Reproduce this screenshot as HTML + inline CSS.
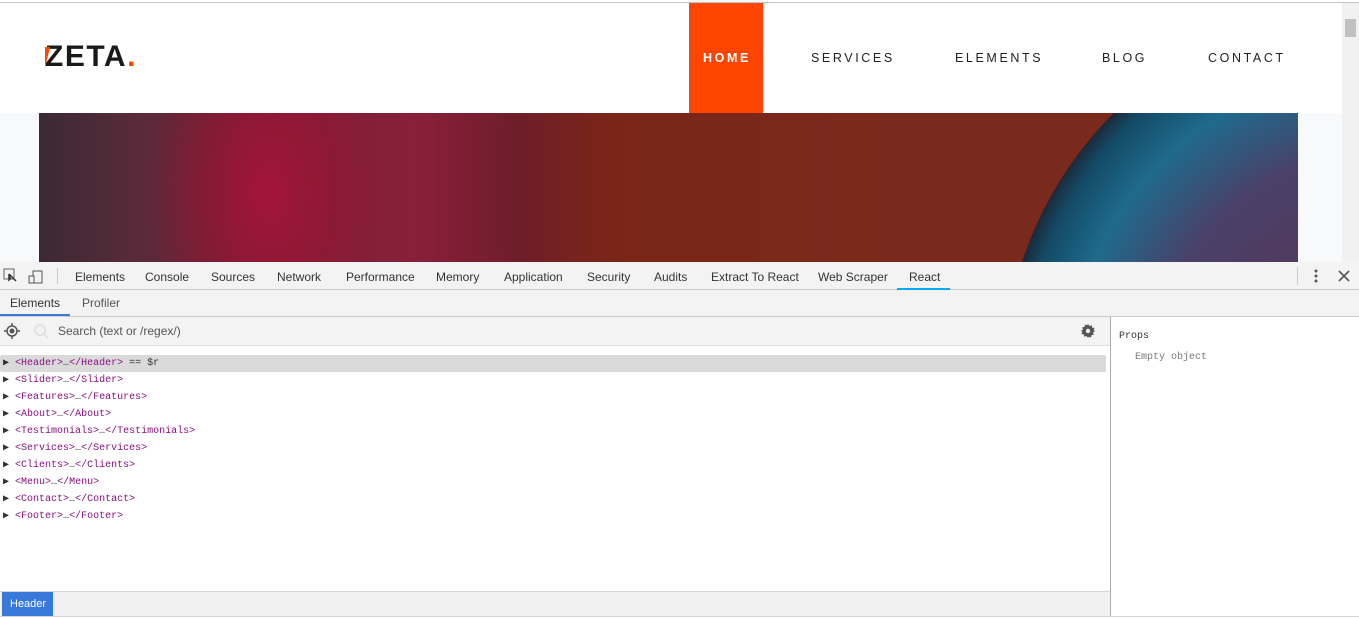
<!DOCTYPE html>
<html><head><style>
*{margin:0;padding:0;box-sizing:border-box}
body{width:1359px;height:619px;overflow:hidden;background:#fff;font-family:"Liberation Sans",sans-serif;position:relative}
.abs{position:absolute}
.nav{font-size:12.5px;letter-spacing:2.6px;color:#222;top:51px}
.tab{position:absolute;top:270px;font-size:12px;color:#333}
.tree{position:absolute;left:3px;font-family:"Liberation Mono",monospace;font-size:10px;color:#881280;line-height:17px}
.tree span{color:#333}
</style></head><body>
<div class="abs" style="left:0;top:2px;width:1359px;height:1px;background:#c4c4c4"></div>
<div class="abs" style="left:0;top:113px;width:1342px;height:149px;background:#f8f9fb"></div>
<div class="abs" style="left:39px;top:113px;width:1259px;height:149px;overflow:hidden;background:
radial-gradient(ellipse 120px 200px at 230px 80px,#a3143a 0%,rgba(150,20,50,.6) 55%,rgba(0,0,0,0) 100%),
linear-gradient(90deg,#3a2a33 0%,#5a2a3a 8%,#6b2436 15%,#8a1f3a 30%,#6e1d2a 38%,#7a2518 45%,#7a2a1c 70%,#7a2a1c 100%)">
<svg width="1259" height="149" style="position:absolute;left:0;top:0"><defs><radialGradient id="g" cx="1341" cy="267" r="377" gradientUnits="userSpaceOnUse"><stop offset="0" stop-color="#5a3050"/><stop offset="0.6" stop-color="#4a4068"/><stop offset="0.82" stop-color="#1f6a8c"/><stop offset="0.95" stop-color="#134a66"/><stop offset="1" stop-color="#1a2a3a"/></radialGradient></defs><circle cx="1341" cy="267" r="377" fill="url(#g)"/></svg>
</div>
<div class="abs" style="left:1342px;top:3px;width:17px;height:259px;background:#f1f1f1"></div>
<div class="abs" style="left:1345px;top:19px;width:11px;height:18px;background:#c1c1c1"></div>
<div class="abs" style="left:45px;top:40px;font-size:30px;font-weight:bold;color:#1a1a1a;letter-spacing:1.5px">ZETA<span style="color:#ff4500">.</span></div>
<svg class="abs" style="left:45px;top:47px" width="12" height="22"><path d="M0 0h5L0 21z" fill="#ff4500"/></svg>
<div class="abs" style="left:689px;top:3px;width:74px;height:110px;background:#ff4500"></div>
<div class="abs nav" style="left:703px;color:#fff;font-weight:bold">HOME</div>
<div class="abs nav" style="left:811px">SERVICES</div>
<div class="abs nav" style="left:955px">ELEMENTS</div>
<div class="abs nav" style="left:1102px">BLOG</div>
<div class="abs nav" style="left:1208px">CONTACT</div>

<div class="abs" style="left:0;top:262px;width:1359px;height:28px;background:#f3f3f3;border-bottom:1px solid #ccc"></div>
<svg class="abs" style="left:3px;top:268px" width="42" height="16"><rect x="1" y="1" width="10" height="10" fill="none" stroke="#666"/><path d="M6 6l7 7M6 6v6l2-2" stroke="#333" stroke-width="1.5" fill="#333"/><rect x="30" y="3" width="9" height="12" fill="none" stroke="#555"/><rect x="26" y="8" width="5" height="7" fill="#f3f3f3" stroke="#555"/></svg>
<div class="abs" style="left:57px;top:268px;width:1px;height:16px;background:#ccc"></div>
<div class="tab" style="left:75px">Elements</div>
<div class="tab" style="left:145px">Console</div>
<div class="tab" style="left:211px">Sources</div>
<div class="tab" style="left:277px">Network</div>
<div class="tab" style="left:346px">Performance</div>
<div class="tab" style="left:436px">Memory</div>
<div class="tab" style="left:504px">Application</div>
<div class="tab" style="left:587px">Security</div>
<div class="tab" style="left:654px">Audits</div>
<div class="tab" style="left:711px">Extract To React</div>
<div class="tab" style="left:818px">Web Scraper</div>
<div class="tab" style="left:909px">React</div>
<div class="abs" style="left:897px;top:288px;width:53px;height:2px;background:#03a9f4"></div>
<div class="abs" style="left:1297px;top:267px;width:1px;height:18px;background:#ccc"></div>
<svg class="abs" style="left:1313px;top:268px" width="6" height="16"><circle cx="3" cy="3" r="1.5" fill="#555"/><circle cx="3" cy="8" r="1.5" fill="#555"/><circle cx="3" cy="13" r="1.5" fill="#555"/></svg>
<svg class="abs" style="left:1338px;top:270px" width="12" height="12"><path d="M1 1l10 10M11 1L1 11" stroke="#555" stroke-width="1.6"/></svg>

<div class="abs" style="left:0;top:290px;width:1359px;height:26px;background:#f3f3f3"></div>
<div class="abs" style="left:10px;top:296px;font-size:12px;color:#333">Elements</div>
<div class="abs" style="left:82px;top:296px;font-size:12px;color:#555">Profiler</div>
<div class="abs" style="left:0;top:314px;width:70px;height:2px;background:#3879d9"></div>
<div class="abs" style="left:0;top:316px;width:1359px;height:1px;background:#ccc"></div>
<div class="abs" style="left:0;top:317px;width:1110px;height:29px;background:#f3f3f3;border-bottom:1px solid #ddd"></div>
<svg class="abs" style="left:4px;top:323px" width="16" height="16"><circle cx="8" cy="8" r="5" fill="none" stroke="#555" stroke-width="1.5"/><circle cx="8" cy="8" r="2.5" fill="#555"/><path d="M8 0v3M8 13v3M0 8h3M13 8h3" stroke="#555" stroke-width="1.5"/></svg>
<svg class="abs" style="left:33px;top:323px" width="16" height="16"><circle cx="7" cy="7" r="5" fill="none" stroke="#ddd" stroke-width="1.5"/><path d="M11 11l4 4" stroke="#ddd" stroke-width="1.5"/></svg>
<div class="abs" style="left:58px;top:324px;font-size:12px;color:#555">Search (text or /regex/)</div>
<svg class="abs" style="left:1081px;top:324px" width="14" height="14" viewBox="0 0 14 14"><path d="M7 0l1.5 2 2.3-.8.3 2.4 2.4.3-.8 2.3L14 7l-2 1.5.8 2.3-2.4.3-.3 2.4-2.3-.8L7 14l-1.5-2-2.3.8-.3-2.4-2.4-.3.8-2.3L0 7l2-1.5-.8-2.3 2.4-.3.3-2.4 2.3.8z" fill="#555"/><circle cx="7" cy="7" r="2.2" fill="#f3f3f3"/></svg>
<div class="abs" style="left:1110px;top:317px;width:1px;height:300px;background:#aaa"></div>
<div class="abs" style="left:1119px;top:331px;font-family:'Liberation Mono',monospace;font-size:10px;color:#333">Props</div>
<div class="abs" style="left:1135px;top:352px;font-family:'Liberation Mono',monospace;font-size:10px;color:#777">Empty object</div>
<div class="abs" style="left:0;top:355px;width:1106px;height:17px;background:#dadada;border-radius:2px"></div>
<div class="tree" style="top:355px"><span>▶ </span>&lt;Header&gt;<span>…</span>&lt;/Header&gt;<span> == $r</span><br><span>▶ </span>&lt;Slider&gt;<span>…</span>&lt;/Slider&gt;<br><span>▶ </span>&lt;Features&gt;<span>…</span>&lt;/Features&gt;<br><span>▶ </span>&lt;About&gt;<span>…</span>&lt;/About&gt;<br><span>▶ </span>&lt;Testimonials&gt;<span>…</span>&lt;/Testimonials&gt;<br><span>▶ </span>&lt;Services&gt;<span>…</span>&lt;/Services&gt;<br><span>▶ </span>&lt;Clients&gt;<span>…</span>&lt;/Clients&gt;<br><span>▶ </span>&lt;Menu&gt;<span>…</span>&lt;/Menu&gt;<br><span>▶ </span>&lt;Contact&gt;<span>…</span>&lt;/Contact&gt;<br><span>▶ </span>&lt;Footer&gt;<span>…</span>&lt;/Footer&gt;</div>
<div class="abs" style="left:0;top:591px;width:1110px;height:26px;background:#f1f1f1;border-top:1px solid #d6d6d6;border-bottom:1px solid #d6d6d6"></div>
<div class="abs" style="left:2px;top:592px;width:51px;height:24px;background:#3879d9;color:#fff;font-size:11px;padding:6px 0 0 8px">Header</div>
<div class="abs" style="left:1110px;top:616px;width:249px;height:1px;background:#d6d6d6"></div>
</body></html>
